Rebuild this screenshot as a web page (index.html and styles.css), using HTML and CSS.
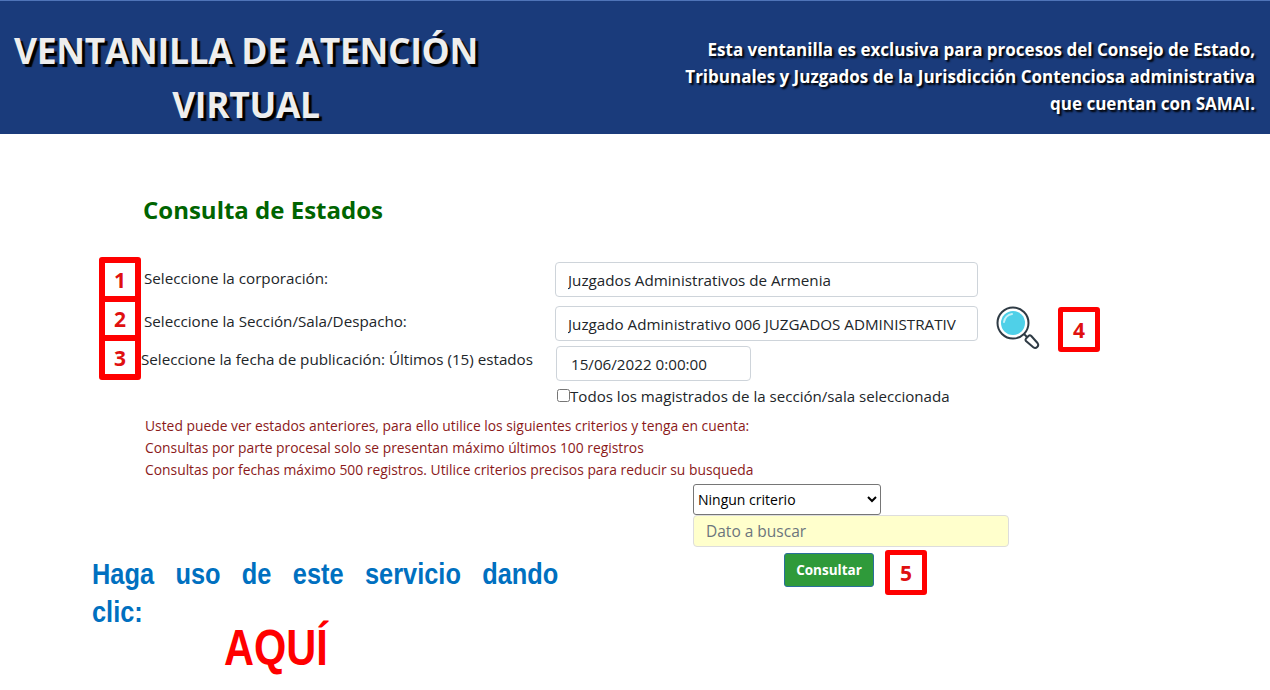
FILE: index.html
```html
<!DOCTYPE html>
<html lang="es">

<head>
    <meta charset="UTF-8">
    <meta name="viewport" content="width=device-width, initial-scale=1.0">
    <title>Ventanilla de Atención Virtual</title>
    <link rel="stylesheet" href="styles.css">
</head>

<body>
    <header class="top-bar">
        <h1>VENTANILLA DE ATENCIÓN<br>VIRTUAL</h1>
        <p>Esta ventanilla es exclusiva para procesos del Consejo de Estado,<br>
            Tribunales y Juzgados de la Jurisdicción Contenciosa administrativa<br>
            que cuentan con SAMAI.</p>
    </header>

    <main class="content">
        <h2>Consulta de Estados</h2>

        <!-- Recuadros rojos sobre el formulario -->
        <div class="steps">
            <span>1</span>
            <span>2</span>
            <span>3</span>
        </div>

        <div class="form-row">
            <label>Seleccione la corporación:</label>
            <input class="field" type="text" value="Juzgados Administrativos de Armenia">
        </div>
        <div class="form-row row-two">
            <label>Seleccione la Sección/Sala/Despacho:</label>
            <input class="field" type="text" value="Juzgado Administrativo 006 JUZGADOS ADMINISTRATIV">
            <svg class="lens" viewBox="0 0 44 44" width="44" height="44">
                <circle cx="17" cy="17" r="15.5" fill="#fff" stroke="#2f3b45" stroke-width="2"/>
                <circle cx="17" cy="17" r="12" fill="#4fd0e8"/>
                <path d="M8 16a9 9 0 0 1 8-8" fill="none" stroke="#c4f1f8" stroke-width="2" stroke-linecap="round"/>
                <path d="M28 28l3 3" stroke="#2f3b45" stroke-width="2"/>
                <path d="M30 32.500l2.500-2.500a2 2 0 0 1 2.800 0l6.200 7a3 3 0 0 1-4.200 4.200l-7.300-6.200a2 2 0 0 1 0-2.500z" fill="#fff" stroke="#2f3b45" stroke-width="2"/>
            </svg>
            <span class="badge">4</span>
        </div>
        <div class="form-row row-three">
            <label>Seleccione la fecha de publicación: Últimos (15) estados</label>
            <input class="field date" type="text" value="15/06/2022 0:00:00">
        </div>
        <div class="check-line">
            <input type="checkbox" id="todos">
            <label for="todos">Todos los magistrados de la sección/sala seleccionada</label>
        </div>

        <div class="notes">
            <p>Usted puede ver estados anteriores, para ello utilice los siguientes criterios y tenga en cuenta:</p>
            <p>Consultas por parte procesal solo se presentan máximo últimos 100 registros</p>
            <p>Consultas por fechas máximo 500 registros. Utilice criterios precisos para reducir su busqueda</p>
        </div>

        <div class="bottom">
            <div class="call">
                <p class="call-text"><span class="call-first">Haga uso de este servicio dando</span>clic:</p>
                <a class="call-link" href="#">AQUÍ</a>
            </div>
            <div class="search">
                <select class="criteria">
                    <option>Ningun criterio</option>
                </select>
                <input class="data" type="text" placeholder="Dato a buscar">
                <div class="submit-line">
                    <button type="button">Consultar</button>
                    <span class="badge">5</span>
                </div>
            </div>
        </div>
    </main>
</body>

</html>
```

FILE: styles.css
```css
* {
    margin: 0;
    padding: 0;
    box-sizing: border-box;
}

body {
    font-family: 'Open Sans', sans-serif;
    font-size: 15.200px;
    color: #212529;
    background-color: #fff;
    overflow: hidden;
}

/* Encabezado */
.top-bar {
    display: flex;
    justify-content: space-between;
    align-items: center;
    height: 134px;
    padding: 18px 15px 0 14px;
    background-color: #1a3b7b;
    border-top: 1px solid #4f74b8;
    color: #fff;
    font-weight: 700;
}

.top-bar h1 {
    width: 464px;
    font-size: 35.400px;
    line-height: 54px;
    text-align: center;
    color: #eee;
    text-shadow: 3px 3px 1px #000;
    letter-spacing: -0.3px;
    white-space: nowrap;
}

.top-bar p {
    font-size: 17px;
    line-height: 27px;
    text-align: right;
    text-shadow: 2px 2px 2px #000;
    white-space: nowrap;
}

/* Formulario */
.content {
    position: relative;
    padding: 59px 0 0 143px;
}

.content h2 {
    height: 69px;
    font-size: 24px;
    line-height: 34px;
    color: #006400;
}

.steps {
    position: absolute;
    left: 99px;
    top: 123px;
    width: 42px;
    height: 123px;
    display: flex;
    flex-direction: column;
    border: 6px solid #f00;
    border-radius: 3px;
}

.steps span {
    flex: 1;
    display: flex;
    align-items: center;
    justify-content: center;
    color: #e01010;
    font-size: 21px;
    font-weight: 700;
}

.steps span + span {
    border-top: 6px solid #f00;
}

.form-row {
    display: flex;
    align-items: center;
    height: 35px;
}

.form-row label {
    width: 412px;
    padding: 0 0 4px 1px;
}

.row-two label {
    padding-bottom: 5px;
}

.row-two {
    margin-top: 9px;
}

.row-three {
    margin-top: 5px;
}

.row-three label {
    width: 414px;
    margin-left: -2px;
    padding: 0 0 9px;
    white-space: nowrap;
}

.field {
    width: 423px;
    height: 35px;
    padding: 0 12px;
    border: 1px solid #ced4da;
    border-radius: 4px;
    font-family: inherit;
    font-size: 15.200px;
    color: #212529;
    background-color: #fff;
}

.field.date {
    width: 195px;
    margin-left: 1px;
    padding-left: 14px;
}

.lens {
    margin: 8px 0 0 18px;
    flex-shrink: 0;
}

.badge {
    display: flex;
    align-items: center;
    justify-content: center;
    width: 42px;
    height: 45px;
    border: 5px solid #f00;
    border-radius: 3px;
    background-color: #fff;
    color: #e01010;
    font-size: 21px;
    font-weight: 700;
}

.row-two .badge {
    margin: 12px 0 0 18px;
    flex-shrink: 0;
}

.check-line {
    display: flex;
    align-items: center;
    margin: 5px 0 0 414px;
    height: 19px;
    font-size: 15.100px;
}

.check-line input {
    width: 13px;
    height: 13px;
}

.notes {
    margin: 10px 0 0 2px;
    font-size: 13.850px;
    line-height: 22px;
    color: #8b1a1a;
}

/* Parte inferior */
.bottom {
    display: flex;
    margin-left: -51px;
}

.call {
    width: 466px;
    padding-top: 74px;
}

.call-text {
    width: 533px;
    font-family: 'Liberation Sans', sans-serif;
    font-size: 29px;
    font-weight: 700;
    line-height: 38px;
    color: #0070c0;
    transform: scaleX(0.875);
    transform-origin: left top;
}

.call-first {
    display: block;
    text-align: justify;
    text-align-last: justify;
}

.call-link {
    display: inline-block;
    margin: -11px 0 0 132px;
    font-family: 'Liberation Sans', sans-serif;
    font-size: 50px;
    font-weight: 700;
    line-height: 56px;
    color: #f00;
    text-decoration: none;
    transform: scaleX(0.83);
    transform-origin: left top;
}

.search {
    margin-left: 135px;
    padding-top: 3px;
}

.criteria {
    display: block;
    width: 188px;
    height: 31px;
    border: 1px solid #767676;
    border-radius: 3px;
    background-color: #fff;
    font-family: inherit;
    font-size: 14px;
    color: #000;
}

.data {
    display: block;
    width: 316px;
    height: 32px;
    padding: 0 12px;
    border: 1px solid #ddd;
    border-radius: 4px;
    background-color: #ffffcc;
    font-family: inherit;
    font-size: 15.500px;
}

.data::placeholder {
    color: #6c757d;
}

.submit-line {
    display: flex;
    align-items: flex-start;
    margin: 3px 0 0 91px;
    gap: 11px;
}

.submit-line button {
    width: 90px;
    height: 34px;
    margin-top: 3px;
    border: 1px solid #2a6f9a;
    border-radius: 3px;
    background-color: #2f9a3a;
    color: #fff;
    font-family: inherit;
    font-size: 13.500px;
    font-weight: 700;
}
```
